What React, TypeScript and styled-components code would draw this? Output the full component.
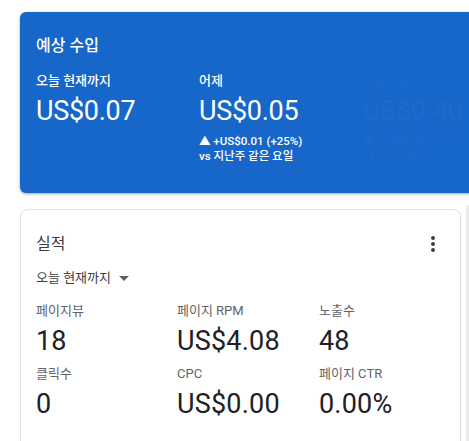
import React from 'react';
import styled, { createGlobalStyle } from 'styled-components';

const GlobalStyle = createGlobalStyle`
  html, body {
    margin: 0;
    padding: 0;
    background: #ffffff;
    overflow: hidden;
  }
  body {
    font-family: Roboto, "Noto Sans CJK KR", sans-serif;
  }
`;

const Page = styled.div`
  width: 469px;
  height: 441px;
  padding: 12px 0 0 20px;
  box-sizing: border-box;
  display: flex;
  flex-direction: column;
  gap: 16px;
  overflow: hidden;
  position: relative;
`;

const EarningsCard = styled.section`
  width: 470px;
  height: 181px;
  background: #1766c9;
  border-radius: 6px;
  box-shadow: 0 1px 3px rgba(0, 0, 0, 0.35);
  color: #ffffff;
  padding: 23px 16px 0 16px;
  box-sizing: border-box;
  flex-shrink: 0;
`;

const CardTitle = styled.h2<{ $dark?: boolean }>`
  margin: 0;
  font-size: 16px;
  line-height: 22px;
  font-weight: ${({ $dark }) => ($dark ? 400 : 500)};
  color: ${({ $dark }) => ($dark ? '#3c4043' : '#ffffff')};
`;

const EarningsRow = styled.div`
  display: grid;
  grid-template-columns: 163px 164px 163px;
  margin-top: 15px;
`;

const EarningsCol = styled.div<{ $faded?: boolean }>`
  display: flex;
  flex-direction: column;
  opacity: ${({ $faded }) => ($faded ? 0.025 : 1)};
`;

const EarningsLabel = styled.div`
  font-size: 13px;
  font-weight: 500;
  line-height: 18px;
`;

const EarningsValue = styled.div`
  font-size: 27px;
  line-height: 36px;
  margin-top: 3px;
  letter-spacing: -0.3px;
`;

const Delta = styled.div`
  font-size: 11.5px;
  font-weight: 500;
  line-height: 15px;
  margin-top: 5px;
`;

const PerfCard = styled.section`
  width: 441px;
  height: 260px;
  background: #ffffff;
  border: 1px solid #e3e3e3;
  border-radius: 8px;
  box-shadow: 0 1px 2px rgba(0, 0, 0, 0.08);
  padding: 22px 15px 0 15px;
  box-sizing: border-box;
  flex-shrink: 0;
`;

const HeaderRow = styled.div`
  display: flex;
  align-items: center;
  justify-content: space-between;
`;

const MenuButton = styled.div`
  width: 24px;
  height: 24px;
  display: flex;
  align-items: center;
  justify-content: center;
`;

const RangeSelect = styled.div`
  display: flex;
  align-items: center;
  gap: 8px;
  margin-top: 13px;
  font-size: 13px;
  line-height: 18px;
  color: #3c4043;
`;

const MetricsGrid = styled.div`
  display: grid;
  grid-template-columns: 141px 142px 120px;
  row-gap: 7px;
  margin-top: 16px;
`;

const Metric = styled.div`
  display: flex;
  flex-direction: column;
`;

const MetricLabel = styled.div`
  font-size: 13px;
  line-height: 16px;
  color: #5f6368;
`;

const MetricValue = styled.div`
  font-size: 27px;
  line-height: 36px;
  margin-top: 4px;
  color: #202124;
  letter-spacing: 0.2px;
`;

const EdgeStrip = styled.div`
  position: absolute;
  right: 0;
  top: 205px;
  width: 3px;
  bottom: 0;
  background: #ececec;
`;

const metrics = [
  { label: '페이지뷰', value: '18' },
  { label: '페이지 RPM', value: 'US$4.08' },
  { label: '노출수', value: '48' },
  { label: '클릭수', value: '0' },
  { label: 'CPC', value: 'US$0.00' },
  { label: '페이지 CTR', value: '0.00%' },
];

export default function App() {
  return (
    <>
      <GlobalStyle />
      <Page>
        <EarningsCard>
          <CardTitle>예상 수입</CardTitle>
          <EarningsRow>
            <EarningsCol>
              <EarningsLabel>오늘 현재까지</EarningsLabel>
              <EarningsValue>US$0.07</EarningsValue>
            </EarningsCol>
            <EarningsCol>
              <EarningsLabel>어제</EarningsLabel>
              <EarningsValue>US$0.05</EarningsValue>
              <Delta>
                ▲ +US$0.01 (+25%)
                <br />
                vs 지난주 같은 요일
              </Delta>
            </EarningsCol>
            <EarningsCol $faded>
              <EarningsLabel>최근 7일</EarningsLabel>
              <EarningsValue>US$0.40</EarningsValue>
              <Delta>
                ▲ +US$0.02 (+5%)
                <br />
                vs 이전 7일
              </Delta>
            </EarningsCol>
          </EarningsRow>
        </EarningsCard>

        <PerfCard>
          <HeaderRow>
            <CardTitle $dark>실적</CardTitle>
            <MenuButton>
              <svg width="4" height="16" viewBox="0 0 4 16">
                <circle cx="2" cy="2" r="2" fill="#3c4043" />
                <circle cx="2" cy="8" r="2" fill="#3c4043" />
                <circle cx="2" cy="14" r="2" fill="#3c4043" />
              </svg>
            </MenuButton>
          </HeaderRow>
          <RangeSelect>
            오늘 현재까지
            <svg width="10" height="5" viewBox="0 0 10 5">
              <path d="M0 0 L10 0 L5 5 Z" fill="#5f6368" />
            </svg>
          </RangeSelect>
          <MetricsGrid>
            {metrics.map((m) => (
              <Metric key={m.label}>
                <MetricLabel>{m.label}</MetricLabel>
                <MetricValue>{m.value}</MetricValue>
              </Metric>
            ))}
          </MetricsGrid>
        </PerfCard>
        <EdgeStrip />
      </Page>
    </>
  );
}
